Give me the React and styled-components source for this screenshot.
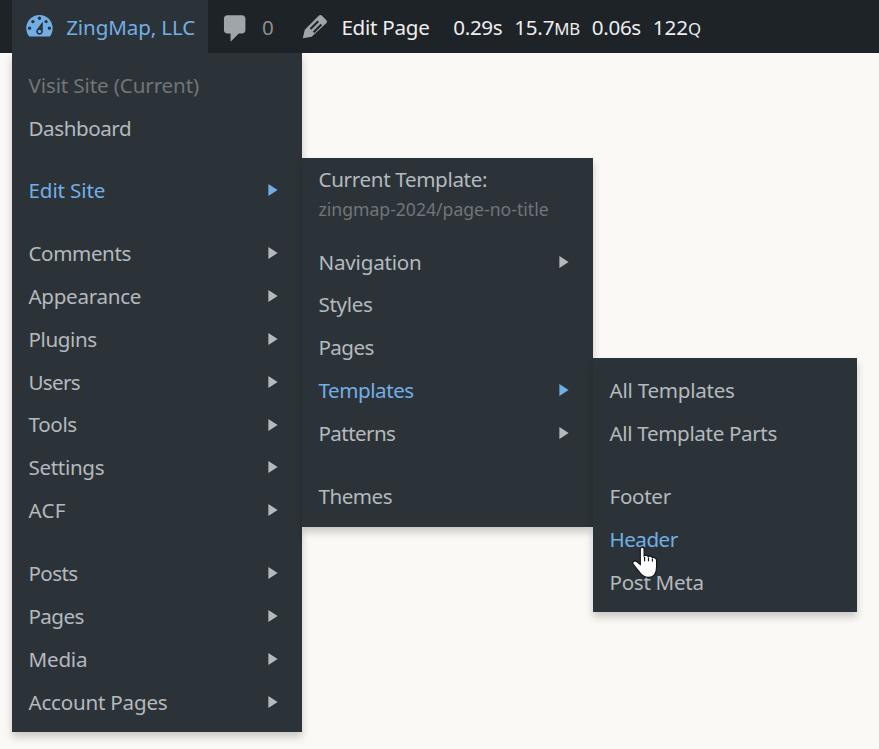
import React from "react";
import styled, { createGlobalStyle } from "styled-components";

const Global = createGlobalStyle`
  *, *::before, *::after { box-sizing: border-box; }
  body {
    margin: 0;
    background: #fbf9f5;
    font-family: "Noto Sans", "Open Sans", sans-serif;
    font-size: 20.6px;
    overflow: hidden;
  }
`;

const Page = styled.main`
  height: 749px;
  overflow: hidden;
`;

const Bar = styled.header`
  display: flex;
  height: 53px;
  padding-left: 12px;
  background: #1d2327;
  color: #f0f0f1;
`;

const BarItem = styled.div`
  display: flex;
  align-items: center;
  flex: none;
  width: ${(p) => p.$width}px;
  padding-left: ${(p) => p.$pad}px;
  gap: ${(p) => p.$gap || 0}px;
  background: ${(p) => (p.$open ? "#2c3338" : "transparent")};
  color: ${(p) => (p.$open ? "#72aee6" : p.$muted ? "#8b8f93" : "#eeeeef")};
`;

const Stats = styled(BarItem)`
  gap: 11.9px;
`;

const BarIcon = styled.svg`
  flex: none;
  width: 33px;
  height: 33px;
  fill: ${(p) => (p.$open ? "#72aee6" : "#a0a5aa")};
  margin-top: ${(p) => p.$drop || 0}px;
`;

const Label = styled.span`
  padding-top: 1.6px;
  white-space: nowrap;
  line-height: 43px;
  letter-spacing: ${(p) => p.$ls ?? -0.5}px;
`;

const Unit = styled.small`
  font-size: 16.8px;
  line-height: 0;
`;

const Menu = styled.nav`
  position: relative;
  width: ${(p) => p.$width}px;
  height: ${(p) => p.$height}px;
  padding-top: 9.9px;
  display: flex;
  flex-direction: column;
  gap: 19.8px;
  background: #2c3338;
  color: #b4b9be;
  box-shadow: 0 5px 8px rgba(0, 0, 0, 0.2);
`;

const RootMenu = styled(Menu)`
  margin-left: 12px;
`;

const Flyout = styled(Menu)`
  position: absolute;
  left: 100%;
  top: ${(p) => p.$top}px;
  padding-top: 10.4px;
`;

const Group = styled.div`
  display: flex;
  flex-direction: column;
`;

const Row = styled.div`
  position: relative;
  display: flex;
  align-items: center;
  justify-content: space-between;
  height: 42.9px;
  padding: 0 24.4px 0 16.5px;
  color: ${(p) => (p.$active ? "#72aee6" : p.$muted ? "#70757a" : "inherit")};
`;

const ArrowIcon = styled.svg`
  flex: none;
  width: 10px;
  height: 12px;
  margin-top: 0.8px;
  fill: currentColor;
`;

const Info = styled.div`
  display: flex;
  flex-direction: column;
  height: 51.6px;
  padding-left: 16.5px;
`;

const InfoTitle = styled.span`
  margin-top: -2px;
  line-height: 26px;
  letter-spacing: -0.34px;
`;

const InfoDetail = styled.span`
  margin-top: 4px;
  font-size: 17.6px;
  line-height: 26px;
  letter-spacing: 0;
  color: #70757a;
`;

const Pointer = styled.svg`
  position: absolute;
  left: 37.5px;
  top: 28px;
  width: 28px;
  height: 34px;
  z-index: 2;
`;

const Item = ({ label, ls, arrow, active, muted, children }) => (
  <Row $active={active} $muted={muted}>
    <Label $ls={ls}>{label}</Label>
    {arrow && (
      <ArrowIcon viewBox="0 0 10 12">
        <path d="M.4 .1 9.6 6 .4 11.9z" />
      </ArrowIcon>
    )}
    {children}
  </Row>
);

const Items = ({ list }) => (
  <Group>
    {list.map((item) => (
      <Item key={item.label} {...item} />
    ))}
  </Group>
);

const siteItems = [
  { label: "Visit Site (Current)", ls: -0.13, muted: true },
  { label: "Dashboard", ls: -0.44 },
];

const contentItems = [
  { label: "Comments", ls: -0.4, arrow: true },
  { label: "Appearance", ls: -0.3, arrow: true },
  { label: "Plugins", ls: -0.42, arrow: true },
  { label: "Users", ls: -0.7, arrow: true },
  { label: "Tools", ls: -0.35, arrow: true },
  { label: "Settings", ls: -0.33, arrow: true },
  { label: "ACF", ls: 0.2, arrow: true },
];

const postItems = [
  { label: "Posts", ls: -0.6, arrow: true },
  { label: "Pages", ls: -0.6, arrow: true },
  { label: "Media", ls: -0.2, arrow: true },
  { label: "Account Pages", ls: -0.22, arrow: true },
];

const editorItems = [
  { label: "Navigation", ls: -0.2, arrow: true },
  { label: "Styles", ls: -0.35 },
  { label: "Pages", ls: -0.6 },
  { label: "Templates", ls: -0.45, arrow: true, active: true },
  { label: "Patterns", ls: -0.6, arrow: true },
];

const templateItems = [
  { label: "All Templates", ls: -0.25 },
  { label: "All Template Parts", ls: -0.35 },
];

const TemplatesFlyout = () => (
  <Flyout $width={264} $height={254} $top={200}>
    <Items list={templateItems} />
    <Group>
      <Item label="Footer" ls={-0.3} />
      <Item label="Header" active>
        <Pointer viewBox="0 0 28 34" fill="none" stroke="#10151f" strokeWidth="1.2">
          <path
            d="M9.3 19.6V4.2C9.3 1.3 13.1 1.3 13.1 4.2V10.9C14 10 16.6 10.1 17.2 11.6C18.3 10.8 20.6 11 21.2 12.5C23.4 11.8 25.6 13.3 25.6 15.6V22C25.6 29.2 22.6 32.3 17.4 32.3C13.2 32.3 11 30.6 8.4 27L2.3 19.4C.7 17.2 3.2 15 5.4 16.4Z"
            fill="#fff"
          />
          <path d="M13.6 12V16.2M17.5 12.4V16.2M21.4 13.4V16.6" />
        </Pointer>
      </Item>
      <Item label="Post Meta" ls={-0.3} />
    </Group>
  </Flyout>
);

const EditSiteFlyout = () => (
  <Flyout $width={291} $height={369} $top={105}>
    <Info>
      <InfoTitle>Current Template:</InfoTitle>
      <InfoDetail>zingmap-2024/page-no-title</InfoDetail>
    </Info>
    <Items list={editorItems} />
    <Items list={[{ label: "Themes" }]} />
    <TemplatesFlyout />
  </Flyout>
);

export default function App() {
  return (
    <Page>
      <Global />
      <Bar>
        <BarItem $open $width={196} $pad={11.4} $gap={9.8}>
          <BarIcon $open viewBox="0 0 20 20">
            <path d="M3.76 16h12.48c1.1-1.37 1.76-3.11 1.76-5 0-4.42-3.58-8-8-8s-8 3.58-8 8c0 1.89.66 3.63 1.76 5zM10 4c.55 0 1 .45 1 1s-.45 1-1 1-1-.45-1-1 .45-1 1-1zM6 6c.55 0 1 .45 1 1s-.45 1-1 1-1-.45-1-1 .45-1 1-1zm8 0c.55 0 1 .45 1 1s-.45 1-1 1-1-.45-1-1 .45-1 1-1zm-5.37 5.55L12 7v6c0 1.1-.9 2-2 2s-2-.9-2-2c0-.57.24-1.08.63-1.45zM4 10c.55 0 1 .45 1 1s-.45 1-1 1-1-.45-1-1 .45-1 1-1zm12 0c.55 0 1 .45 1 1s-.45 1-1 1-1-.45-1-1 .45-1 1-1zm-5 3c0-.55-.45-1-1-1s-1 .45-1 1 .45 1 1 1 1-.45 1-1z" />
          </BarIcon>
          <Label $ls={-0.12}>ZingMap, LLC</Label>
        </BarItem>
        <BarItem $muted $width={80} $pad={11.2} $gap={9.8}>
          <BarIcon $drop={3.4} viewBox="0 0 20 20">
            <path d="M5 2h9c1.1 0 2 .9 2 2v7c0 1.1-.9 2-2 2h-2l-5 5v-5H5c-1.1 0-2-.9-2-2V4c0-1.1.9-2 2-2z" />
          </BarIcon>
          <Label>0</Label>
        </BarItem>
        <BarItem $width={154} $pad={10.4} $gap={10}>
          <BarIcon viewBox="0 0 20 20">
            <path
              d="M12.7 3.4c.5-.5 1.2-.5 1.7 0l2.8 2.8c.5.5.5 1.2 0 1.7l-8.9 8.3L2.9 17.1 4.1 12zM7.1 11.1l.9.9 4.7-4.7-.9-.9zM9 13l.9.9 4.7-4.7-.9-.9z"
              fillRule="evenodd"
            />
          </BarIcon>
          <Label $ls={-0.25}>Edit Page</Label>
        </BarItem>
        <Stats $width={270} $pad={11.2}>
          <Label $ls={-0.3}>0.29s</Label>
          <Label $ls={-0.25}>15.7<Unit>MB</Unit></Label>
          <Label $ls={-0.3}>0.06s</Label>
          <Label $ls={-0.1}>122<Unit>Q</Unit></Label>
        </Stats>
      </Bar>
      <RootMenu $width={290} $height={679}>
        <Items list={siteItems} />
        <Items list={[{ label: "Edit Site", ls: -0.12, arrow: true, active: true }]} />
        <Items list={contentItems} />
        <Items list={postItems} />
        <EditSiteFlyout />
      </RootMenu>
    </Page>
  );
}
